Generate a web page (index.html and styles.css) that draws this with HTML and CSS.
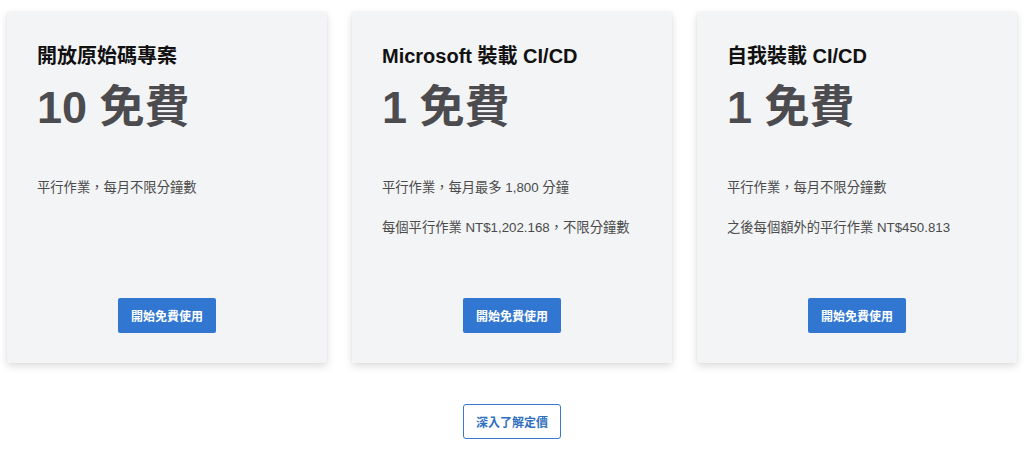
FILE: index.html
```html
<!DOCTYPE html>
<html lang="zh-Hant">
<head>
<meta charset="utf-8">
<link rel="stylesheet" href="styles.css">
</head>
<body>
<main class="page">
  <section class="cards">
    <article class="card">
      <h2 class="card-title">開放原始碼專案</h2>
      <div class="card-price">10 免費</div>
      <div class="card-body">
        <p class="card-text">平行作業，每月不限分鐘數</p>
      </div>
      <div class="card-action"><a class="btn-primary" href="#">開始免費使用</a></div>
    </article>
    <article class="card">
      <h2 class="card-title">Microsoft 裝載 CI/CD</h2>
      <div class="card-price">1 免費</div>
      <div class="card-body">
        <p class="card-text">平行作業，每月最多 1,800 分鐘</p>
        <p class="card-text">每個平行作業 NT$1,202.168，不限分鐘數</p>
      </div>
      <div class="card-action"><a class="btn-primary" href="#">開始免費使用</a></div>
    </article>
    <article class="card">
      <h2 class="card-title">自我裝載 CI/CD</h2>
      <div class="card-price">1 免費</div>
      <div class="card-body">
        <p class="card-text">平行作業，每月不限分鐘數</p>
        <p class="card-text">之後每個額外的平行作業 NT$450.813</p>
      </div>
      <div class="card-action"><a class="btn-primary" href="#">開始免費使用</a></div>
    </article>
  </section>
  <div class="more">
    <a class="btn-outline" href="#">深入了解定價</a>
  </div>
</main>
</body>
</html>
```
FILE: styles.css
```css
* { box-sizing: border-box; }
html, body { margin: 0; padding: 0; background: #ffffff; }
body {
  font-family: "Liberation Sans", Arial, "Noto Sans CJK TC", sans-serif;
  color: #222;
}
.page {
  padding: 12px 7px 0;
}
.cards {
  display: grid;
  grid-template-columns: repeat(3, 1fr);
  gap: 25px;
}
.card {
  background: #f3f4f6;
  min-height: 351px;
  padding: 30px 30px 30px;
  display: flex;
  flex-direction: column;
  box-shadow: 0 3px 8px rgba(0, 0, 0, 0.14), 0 0 2px rgba(0, 0, 0, 0.05);
}
.card-title {
  margin: 0;
  font-size: 20px;
  line-height: 28px;
  font-weight: 700;
  color: #111;
}
.card-price {
  margin-top: 12px;
  font-size: 45px;
  line-height: 52px;
  font-weight: 700;
  color: #4b4b50;
}
.card-body {
  margin-top: 44px;
}
.card-text {
  margin: 0 0 20px;
  font-size: 13.3px;
  line-height: 20px;
  color: #4a4a4a;
}
.card-action {
  margin-top: auto;
  display: flex;
  justify-content: center;
}
.btn-primary {
  display: inline-flex;
  align-items: center;
  justify-content: center;
  width: 98px;
  height: 35px;
  background: #3176d0;
  color: #fff;
  font-size: 12px;
  font-weight: 700;
  text-decoration: none;
  border-radius: 2px;
}
.more {
  display: flex;
  justify-content: center;
  margin-top: 41px;
}
.btn-outline {
  display: inline-flex;
  align-items: center;
  justify-content: center;
  width: 98px;
  height: 35px;
  border: 1px solid #3a78cc;
  color: #2f6fbf;
  background: #fff;
  font-size: 12px;
  font-weight: 700;
  text-decoration: none;
  border-radius: 3px;
}
```
